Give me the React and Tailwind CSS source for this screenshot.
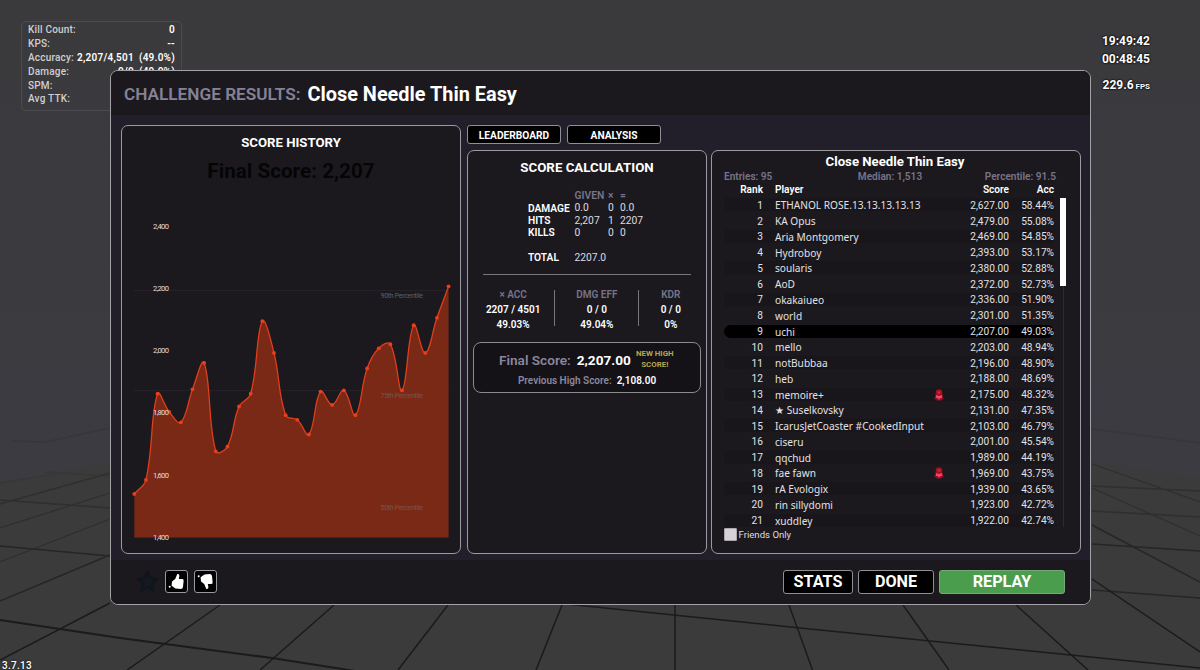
const HUD_STATS = [
  { label: 'Kill Count:', value: '0' },
  { label: 'KPS:', value: '--' },
  { label: 'Accuracy:', value: '2,207/4,501', percent: '(49.0%)' },
  { label: 'Damage:', value: '0/0', percent: '(49.0%)' },
  { label: 'SPM:', value: '' },
  { label: 'Avg TTK:', value: '' },
]

// [name, score, accuracy, has badge]
const ENTRIES = [
  ['ETHANOL ROSE.13.13.13.13.13', '2,627.00', '58.44%'],
  ['KA Opus', '2,479.00', '55.08%'],
  ['Aria Montgomery', '2,469.00', '54.85%'],
  ['Hydroboy', '2,393.00', '53.17%'],
  ['soularis', '2,380.00', '52.88%'],
  ['AoD', '2,372.00', '52.73%'],
  ['okakaiueo', '2,336.00', '51.90%'],
  ['world', '2,301.00', '51.35%'],
  ['uchi', '2,207.00', '49.03%'],
  ['mello', '2,203.00', '48.94%'],
  ['notBubbaa', '2,196.00', '48.90%'],
  ['heb', '2,188.00', '48.69%'],
  ['memoire+', '2,175.00', '48.32%', true],
  ['★ Suselkovsky', '2,131.00', '47.35%'],
  ['IcarusJetCoaster #CookedInput', '2,103.00', '46.79%'],
  ['ciseru', '2,001.00', '45.54%'],
  ['qqchud', '1,989.00', '44.19%'],
  ['fae fawn', '1,969.00', '43.75%', true],
  ['rA Evologix', '1,939.00', '43.65%'],
  ['rin sillydomi', '1,923.00', '42.72%'],
  ['xuddley', '1,922.00', '42.74%'],
]

const PLAYER_RANK = 9

const HISTORY = [
  1540, 1585, 1862, 1804, 1770, 1876, 1961, 1677, 1692, 1821, 1862, 2095, 1993, 1793,
  1778, 1731, 1869, 1826, 1873, 1793, 1943, 2008, 2021, 1873, 2082, 1993, 2106, 2207,
]

const TICKS = [2400, 2200, 2000, 1800, 1600, 1400]

const PERCENTILES = [
  { label: '90th Percentile', y: 100, line: 94.5, fill: '#605e62' },
  { label: '75th Percentile', y: 199.5, line: 194.5, fill: '#71594d' },
  { label: '50th Percentile', y: 311.5, line: null, fill: '#71594d' },
]

const toX = (i) => 12.3 + i * 11.64
const toY = (score) => 341.5 - ((score - 1400) / 1000) * 311.2

// cubic spline through all points
function splinePath(points, tension = 0.4) {
  const controls = points.map((p, i) => {
    const prev = points[i - 1] || p
    const next = points[i + 1] || p
    const d01 = Math.hypot(p[0] - prev[0], p[1] - prev[1])
    const d12 = Math.hypot(next[0] - p[0], next[1] - p[1])
    const a = (tension * d01) / (d01 + d12)
    const b = (tension * d12) / (d01 + d12)
    const dx = next[0] - prev[0]
    const dy = next[1] - prev[1]
    return [p[0] - a * dx, p[1] - a * dy, p[0] + b * dx, p[1] + b * dy]
  })
  return points.reduce((path, p, i) => {
    if (i === 0) return `M${p[0]} ${p[1]}`
    const from = controls[i - 1]
    const to = controls[i]
    return `${path} C${from[2]} ${from[3]} ${to[0]} ${to[1]} ${p[0]} ${p[1]}`
  }, '')
}

function Arena() {
  return (
    <svg className="absolute inset-0" width="1200" height="670" fill="none">
      <defs>
        <linearGradient id="wall" x1="0" y1="0" x2="0" y2="1">
          <stop offset="0" stopColor="#3a393c" />
          <stop offset="1" stopColor="#3c3b41" />
        </linearGradient>
      </defs>
      <rect width="1200" height="484" fill="url(#wall)" />
      <path d="M0 483L110 462H1090L1200 478V670H0Z" fill="#3b3b3b" />
      <g stroke="#373737" strokeWidth="1.5">
        <path d="M12 441L45 442L110 428M1092 429L1200 443M0 483L60 473M45 472L110 476" />
      </g>
      <g stroke="#2f2f30" strokeWidth="1.3">
        <path d="M0 504L110 473M0 528L110 493M0 562L110 519M0 500L110 508" />
        <path d="M1092 464L1200 502M1092 488L1200 536M1092 486L1200 491M1092 511L1200 517" />
      </g>
      <g stroke="#262627" strokeWidth="1.5">
        <path d="M0 601L110 555M0 546L110 556M1092 525L1200 582M1092 544L1200 551M1092 590L1200 598" />
      </g>
      <g stroke="#1b1b1c" strokeWidth="1.5">
        <path d="M110 603L0 660M220 605L127 670M334 605L260 670M448 605L398 670M562 605L536 670M675 605V670" />
        <path d="M789 605L812.5 670M903 605L949 670M1016 605L1088 670M1092 579L1200 652" />
        <path d="M566 604L800 628L1200 668" />
      </g>
      <path d="M0 620L120 638L272 658L355 671" stroke="#1b1b1c" strokeWidth="2" />
    </svg>
  )
}

function Hud() {
  return (
    <div className="absolute left-[21px] top-[21px] h-[90px] w-[161px] rounded-[4px] border border-[#4b4a4e] px-1.5 pt-px">
      {HUD_STATS.map(({ label, value, percent }) => (
        <div key={label} className="flex h-[13.800px] items-center justify-between whitespace-nowrap text-[10px]">
          <span className="font-medium tracking-[0.2px] text-[#cfcfd1]">{label}</span>
          <span className="flex gap-[5px] font-semibold tracking-[0.25px] text-white">
            <span>{value}</span>
            {percent && <span>{percent}</span>}
          </span>
        </div>
      ))}
    </div>
  )
}

function Clock() {
  return (
    <div className="absolute right-[50px] top-[31.500px] flex flex-col items-end whitespace-nowrap text-[12px] font-bold leading-[18.500px] text-white [text-shadow:0_0_2px_#000,0_0_2px_#000]">
      <span>19:49:42</span>
      <span>00:48:45</span>
      <span className="mt-[7px]">
        229.6 <span className="-ml-px text-[8px]">FPS</span>
      </span>
    </div>
  )
}

function Panel({ className, children }) {
  return (
    <section className={`rounded-[7px] border border-[#9b9aa1] bg-[#1b191e] ${className}`}>
      {children}
    </section>
  )
}

function ScoreHistory() {
  const points = HISTORY.map((score, i) => [toX(i), toY(score)])
  const line = splinePath(points)
  return (
    <Panel className="flex w-[340px] flex-col">
      <h2 className="mt-[9px] text-center text-[13.200px] font-bold leading-4 text-white">SCORE HISTORY</h2>
      <p className="mt-2 text-center text-[20.700px] font-bold leading-6 text-[#050506]">Final Score: 2,207</p>
      <svg className="mt-[13px] block" width="338" height="356">
        {PERCENTILES.filter((p) => p.line).map((p) => (
          <line key={p.label} x1="12" x2="327" y1={p.line} y2={p.line} stroke="#242227" />
        ))}
        <path d={`${line} L${toX(27)} 341.5 L${toX(0)} 341.5 Z`} fill="#7a2916" />
        <path d={line} fill="none" stroke="#e03e1c" strokeWidth="1.3" />
        {points.map(([x, y]) => (
          <circle key={x} cx={x} cy={y} r="1.9" fill="#e8401d" />
        ))}
        {TICKS.map((tick) => (
          <text key={tick} x="31" y={toY(tick) + 2.4} fill="#e0dde0" fontSize="7.6" textLength="16">
            {tick.toLocaleString('en-US')}
          </text>
        ))}
        {PERCENTILES.map((p) => (
          <text key={p.label} x="258.500" y={p.y + 2.3} fill={p.fill} fontSize="7" textLength="42.5">
            {p.label}
          </text>
        ))}
      </svg>
    </Panel>
  )
}

function Tab({ children }) {
  return (
    <button className="h-[19px] w-[94px] rounded-[3px] border border-[#8f8e95] bg-black pt-[3px] text-[10.200px] font-bold leading-none text-white">
      {children}
    </button>
  )
}

function CalcRow({ label, given, times, total, head }) {
  const tone = head ? 'text-[#77748a] font-semibold' : 'text-[#dddce0]'
  return (
    <div className={`grid h-[12.450px] grid-cols-[46.500px_33.500px_12px_auto] items-center text-[10.300px] ${tone}`}>
      <span className="text-[10.200px] font-semibold text-white">{label}</span>
      <span>{given}</span>
      <span>{times}</span>
      <span>{total}</span>
    </div>
  )
}

function Ratio({ label, ratio, percent, className }) {
  return (
    <div className={`flex flex-col items-center whitespace-nowrap text-[10px] font-semibold leading-[15.200px] text-white ${className}`}>
      <span className="text-[#77748a]">{label}</span>
      <span>{ratio}</span>
      <span>{percent}</span>
    </div>
  )
}

function ScoreCalculation() {
  return (
    <Panel className="w-[240px] px-[5px]">
      <h2 className="mt-2 text-center text-[13.300px] font-bold leading-[18px] text-white">SCORE CALCULATION</h2>
      <div className="ml-[55px] mt-[11px]">
        <CalcRow head given="GIVEN" times="×" total="=" />
        <CalcRow label="DAMAGE" given="0.0" times="0" total="0.0" />
        <CalcRow label="HITS" given="2,207" times="1" total="2207" />
        <CalcRow label="KILLS" given="0" times="0" total="0" />
        <CalcRow />
        <CalcRow label="TOTAL" given="2207.0" />
      </div>
      <div className="mx-[10px] mt-[11px] h-px bg-[#77767b]" />
      <div className="mt-[12px] flex h-[46px] items-start">
        <Ratio className="w-[82px] pr-px" label="× ACC" ratio="2207 / 4501" percent="49.03%" />
        <div className="mt-[3px] h-9 w-px bg-[#77767b]" />
        <Ratio className="w-[83px] pl-px" label="DMG EFF" ratio="0 / 0" percent="49.04%" />
        <div className="mt-[3px] h-9 w-px bg-[#77767b]" />
        <Ratio className="w-[63px] pl-0.5" label="KDR" ratio="0 / 0" percent="0%" />
      </div>
      <div className="mt-[9px] h-[51px] rounded-[8px] border border-[#8b8a91] bg-[#141217] pt-[7px]">
        <div className="flex h-[21px] items-center whitespace-nowrap pl-[25px] text-[13.600px] font-semibold">
          <span className="pt-px text-[#8a879c]">Final Score:</span>
          <span className="ml-1.5 pt-px font-bold text-white">2,207.00</span>
          <span className="-mt-[2px] ml-1 w-10 text-center text-[7.900px] font-bold leading-[11px] text-[#b8a64a]">
            NEW HIGH
            <br />
            SCORE!
          </span>
        </div>
        <div className="flex justify-center gap-[5px] text-[10px] font-semibold leading-[19px]">
          <span className="text-[#8a879c]">Previous High Score:</span>
          <span className="text-white">2,108.00</span>
        </div>
      </div>
    </Panel>
  )
}

function Badge() {
  return (
    <svg width="10" height="12" viewBox="0 0 10 12">
      <path d="M2 1.500Q5 -1 8 1.500L8.500 6L9.700 10.500L8 10L7.500 11.500H2.500L2.300 10L.3 10.500L1.500 6Z" fill="#9c1020" />
      <path d="M2.200 6L5 7L7.800 6L8 9L6 9L5 11L4 9H2Z" fill="#f2447f" />
      <path d="M3 2.500H7L6.200 4.500H4Z" fill="#e0262c" />
    </svg>
  )
}

function EntryRow({ rank, entry }) {
  const [name, score, acc, badge] = entry
  let tone = rank % 2 ? 'bg-[#18161a]' : ''
  if (rank === PLAYER_RANK) tone = 'rounded-full bg-black'
  return (
    <div className="flex h-[15.770px] shrink-0 items-center">
      <div className={`grid h-[13px] w-full grid-cols-[39px_12px_155px_1fr_50px_45px] items-center whitespace-nowrap text-[10.150px] leading-[13px] text-[#e3e2e5] ${tone}`}>
        <span className="text-right">{rank}</span>
        <span />
        <span className="pt-px font-['Noto_Sans','DejaVu_Sans',sans-serif] text-[10.150px]">{name}</span>
        <span className="pl-1">{badge && <Badge />}</span>
        <span className="text-right">{score}</span>
        <span className="text-right">{acc}</span>
      </div>
    </div>
  )
}

function Leaderboard() {
  return (
    <Panel className="flex w-[370px] flex-col pl-[12px]">
      <h2 className="mt-[3px] pr-[14px] text-center text-[13.200px] font-bold leading-4 text-white">Close Needle Thin Easy</h2>
      <div className="grid w-[332px] grid-cols-3 text-[10.100px] font-semibold leading-[13px] text-[#77748a]">
        <span>Entries: 95</span>
        <span className="text-center">Median: 1,513</span>
        <span className="text-right">Percentile: 91.5</span>
      </div>
      <div className="grid w-[330px] grid-cols-[39px_12px_1fr_50px_45px] text-[10.100px] font-semibold leading-[13px] text-white">
        <span className="text-right">Rank</span>
        <span />
        <span>Player</span>
        <span className="text-right">Score</span>
        <span className="text-right">Acc</span>
      </div>
      <div className="mt-px flex h-[330px]">
        <div className="flex w-[330px] flex-col">
          {ENTRIES.map((entry, i) => (
            <EntryRow key={entry[0]} rank={i + 1} entry={entry} />
          ))}
        </div>
        <div className="ml-[6px] flex w-1.5 flex-col items-center pt-px">
          <div className="h-[88px] w-1.5 shrink-0 bg-white" />
          <div className="w-px flex-1 bg-[#2c2a30]" />
        </div>
      </div>
      <label className="mt-px flex items-center gap-[2px] text-[9.600px] leading-[13px] text-[#dddce0]">
        <span className="size-[12.500px] rounded-[1px] border border-[#aaa7ab] bg-[#d5d1d6]" />
        Friends Only
      </label>
    </Panel>
  )
}

function ThumbIcon({ className }) {
  return (
    <svg className={className} width="17" height="17" viewBox="0 0 17 17" fill="currentColor">
      <path d="M9.300 1Q11.500 .6 11.400 3L10.800 6H14.200Q16 6.200 15.600 8L15 14Q14.600 15.800 12.800 16L7.500 15.600L3.600 12.800L4 8.400L7.200 6Z" />
      <circle cx="1.700" cy="13.700" r="1" />
    </svg>
  )
}

function VoteButton({ down }) {
  return (
    <button className="ml-1.5 flex size-[23px] items-center justify-center rounded-[3px] border border-[#99989c] bg-black text-white">
      <ThumbIcon className={down ? '-scale-y-100' : ''} />
    </button>
  )
}

function FooterButton({ className, children }) {
  return (
    <button className={`h-6 rounded-[3px] border pt-[2px] text-[16.200px] font-bold leading-none text-white ${className}`}>
      {children}
    </button>
  )
}

export default function App() {
  return (
    <div className="relative h-[670px] w-[1200px] overflow-hidden bg-[#3b3b3b] font-[Roboto,sans-serif]">
      <Arena />
      <Hud />
      <Clock />

      <main className="absolute left-[110px] top-[70px] flex h-[535px] w-[981px] flex-col rounded-[8px] border border-[#a3a2a6] bg-[#221f2a]">
        <header className="flex h-[44px] items-center gap-[7px] rounded-t-[7px] bg-[#1b191e] pl-[13px] pt-[3px]">
          <span className="text-[17.200px] font-semibold text-[#858297]">CHALLENGE RESULTS:</span>
          <h1 className="text-[19.900px] font-bold text-white">Close Needle Thin Easy</h1>
        </header>

        <div className="flex gap-[6px] px-[10px] pt-[10px]">
          <ScoreHistory />
          <div className="flex flex-col gap-[6px]">
            <div className="flex gap-[6px]">
              <Tab>LEADERBOARD</Tab>
              <Tab>ANALYSIS</Tab>
            </div>
            <div className="flex h-[404px] gap-1">
              <ScoreCalculation />
              <Leaderboard />
            </div>
          </div>
        </div>

        <footer className="mt-auto flex h-[44px] items-center rounded-b-[7px] bg-[#1b191e] pb-px pl-[25px] pr-[25px]">
          <svg width="23" height="23" viewBox="0 0 24 24" fill="#15191f" stroke="#0e161d" strokeWidth="2.4" strokeLinejoin="round">
            <path d="M12 2.200L15.100 8.500L22 9.500L17 14.400L18.200 21.300L12 18L5.800 21.300L7 14.400L2 9.500L8.900 8.500Z" />
          </svg>
          <VoteButton />
          <VoteButton down />
          <div className="ml-auto flex gap-[5px]">
            <FooterButton className="w-[70px] border-[#8f8e95] bg-black">STATS</FooterButton>
            <FooterButton className="w-[76px] border-[#8f8e95] bg-black">DONE</FooterButton>
            <FooterButton className="w-[126px] border-[#77a77b] bg-[#4a9d4d]">REPLAY</FooterButton>
          </div>
        </footer>
      </main>

      <span className="absolute left-[2px] top-[660px] text-[10px] font-medium leading-3 tracking-[0.3px] text-white [text-shadow:0_0_2px_#000]">
        3.7.13
      </span>
    </div>
  )
}
